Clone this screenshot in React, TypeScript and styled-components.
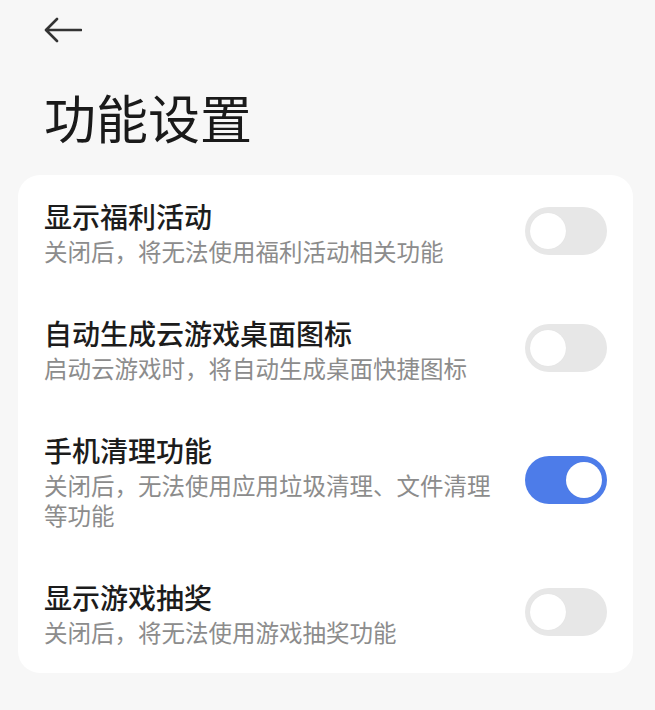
import React, { useState } from "react";
import styled, { createGlobalStyle } from "styled-components";

const GlobalStyle = createGlobalStyle`
  html, body {
    margin: 0;
    padding: 0;
    background: #f7f7f7;
    font-family: "Noto Sans CJK SC", "Noto Sans", sans-serif;
  }
`;

const Page = styled.div`
  width: 655px;
  min-height: 710px;
  background: #f7f7f7;
  box-sizing: border-box;
  padding: 16px 22px 0 18px;
`;

const Header = styled.div`
  display: flex;
  flex-direction: column;
  padding-left: 26px;
`;

const BackButton = styled.button`
  display: flex;
  align-items: center;
  width: 40px;
  height: 28px;
  padding: 0;
  border: none;
  background: transparent;
  color: #333;
  cursor: pointer;
`;

const Title = styled.h1`
  margin: 43px 0 28px;
  font-size: 52px;
  line-height: 60px;
  font-weight: 400;
  color: #1a1a1a;
`;

const Card = styled.div`
  background: #ffffff;
  border-radius: 22px;
  padding: 0 26px;
  display: flex;
  flex-direction: column;
`;

const Row = styled.div`
  display: flex;
  align-items: center;
  gap: 30px;
  padding: 21px 0 26px;
`;

const TextCol = styled.div`
  flex: 1;
  display: flex;
  flex-direction: column;
  min-width: 0;
`;

const RowTitle = styled.div`
  font-size: 28px;
  line-height: 40px;
  font-weight: 500;
  color: #1c1c1c;
`;

const RowDesc = styled.div`
  font-size: 23.5px;
  line-height: 30px;
  font-weight: 400;
  color: #8c8c8c;
`;

const Track = styled.button<{ $on: boolean }>`
  position: relative;
  flex: none;
  width: 82px;
  height: 48px;
  border-radius: 24px;
  border: none;
  padding: 0;
  cursor: pointer;
  background: ${(p) => (p.$on ? "#4d7ce9" : "#e7e7e7")};
  transition: background 0.2s;
`;

const Knob = styled.span<{ $on: boolean }>`
  position: absolute;
  top: 6px;
  left: ${(p) => (p.$on ? "41px" : "5px")};
  width: 36px;
  height: 36px;
  border-radius: 50%;
  background: #ffffff;
  box-shadow: 0 0 1px rgba(0, 0, 0, 0.08);
  transition: left 0.2s;
`;

type Item = { title: string; desc: string; on: boolean };

const initial: Item[] = [
  { title: "显示福利活动", desc: "关闭后，将无法使用福利活动相关功能", on: false },
  { title: "自动生成云游戏桌面图标", desc: "启动云游戏时，将自动生成桌面快捷图标", on: false },
  { title: "手机清理功能", desc: "关闭后，无法使用应用垃圾清理、文件清理等功能", on: true },
  { title: "显示游戏抽奖", desc: "关闭后，将无法使用游戏抽奖功能", on: false },
];

export default function App() {
  const [items, setItems] = useState<Item[]>(initial);
  const toggle = (i: number) =>
    setItems((prev) => prev.map((it, j) => (j === i ? { ...it, on: !it.on } : it)));

  return (
    <>
      <GlobalStyle />
      <Page>
        <Header>
          <BackButton aria-label="返回">
            <svg width="38" height="26" viewBox="0 0 38 26" fill="none">
              <path
                d="M37 13H2.5M13 2L2 13l11 11"
                stroke="#333"
                strokeWidth="2.6"
                strokeLinecap="round"
                strokeLinejoin="round"
              />
            </svg>
          </BackButton>
          <Title>功能设置</Title>
        </Header>
        <Card>
          {items.map((it, i) => (
            <Row key={it.title}>
              <TextCol>
                <RowTitle>{it.title}</RowTitle>
                <RowDesc>{it.desc}</RowDesc>
              </TextCol>
              <Track $on={it.on} onClick={() => toggle(i)} aria-pressed={it.on}>
                <Knob $on={it.on} />
              </Track>
            </Row>
          ))}
        </Card>
      </Page>
    </>
  );
}
